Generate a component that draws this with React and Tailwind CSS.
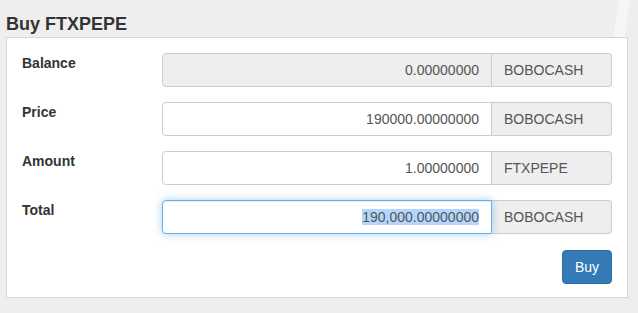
import React from "react";

const font = { fontFamily: '"Liberation Sans", Arial, sans-serif' };

function Row({ label, children }) {
  return (
    <div className="flex items-start h-[34px]">
      <div className="w-[140px] shrink-0 text-[14px] leading-[20px] font-bold text-[#333]">{label}</div>
      <div className="flex flex-1 h-[34px]">{children}</div>
    </div>
  );
}

function Field({ value, disabled, focus }) {
  const base = "flex-1 flex items-center justify-end pr-3 h-[34px] border rounded-l-[4px] text-[14px] text-[#555]";
  if (focus) {
    return (
      <div className={base + " bg-white border-[#66afe9] shadow-[inset_0_1px_1px_rgba(0,0,0,0.075),0_0_8px_rgba(102,175,233,0.6)] relative z-10"}>
        <span className="bg-[#b4d5fe] leading-[16px] inline-block">{value}</span>
      </div>
    );
  }
  return <div className={base + (disabled ? " bg-[#eeeeee] border-[#cccccc]" : " bg-white border-[#cccccc]")}>{value}</div>;
}

function Addon({ text }) {
  return (
    <div className="w-[120px] shrink-0 flex items-center pl-3 h-[34px] bg-[#eeeeee] border border-l-0 border-[#cccccc] rounded-r-[4px] text-[14px] text-[#555]">
      {text}
    </div>
  );
}

export default function App() {
  return (
    <div className="relative w-[638px] h-[313px] bg-[#eeeeee] overflow-hidden" style={font}>
      <svg className="absolute left-[608px] top-0" width="30" height="37" viewBox="0 0 30 37">
        <polygon points="11,0 22,0 17,37 5,37" fill="#f6f6f6" />
      </svg>
      <div className="relative pl-[6px] pt-[14px]">
        <div className="h-[20px] text-[18px] leading-[20px] font-bold text-[#333]">Buy FTXPEPE</div>
        <div className="mt-[3px] w-[622px] h-[261px] bg-white border border-[#d6d6d6] px-[15px] pt-[15px] flex flex-col">
          <div className="flex flex-col gap-[15px]">
            <Row label="Balance">
              <Field value="0.00000000" disabled />
              <Addon text="BOBOCASH" />
            </Row>
            <Row label="Price">
              <Field value="190000.00000000" />
              <Addon text="BOBOCASH" />
            </Row>
            <Row label="Amount">
              <Field value="1.00000000" />
              <Addon text="FTXPEPE" />
            </Row>
            <Row label="Total">
              <Field value="190,000.00000000" focus />
              <Addon text="BOBOCASH" />
            </Row>
          </div>
          <div className="flex justify-end mt-[16px]">
            <button className="w-[50px] h-[34px] bg-[#337ab7] border border-[#2e6da4] rounded-[4px] text-white text-[14px]">Buy</button>
          </div>
        </div>
      </div>
    </div>
  );
}
